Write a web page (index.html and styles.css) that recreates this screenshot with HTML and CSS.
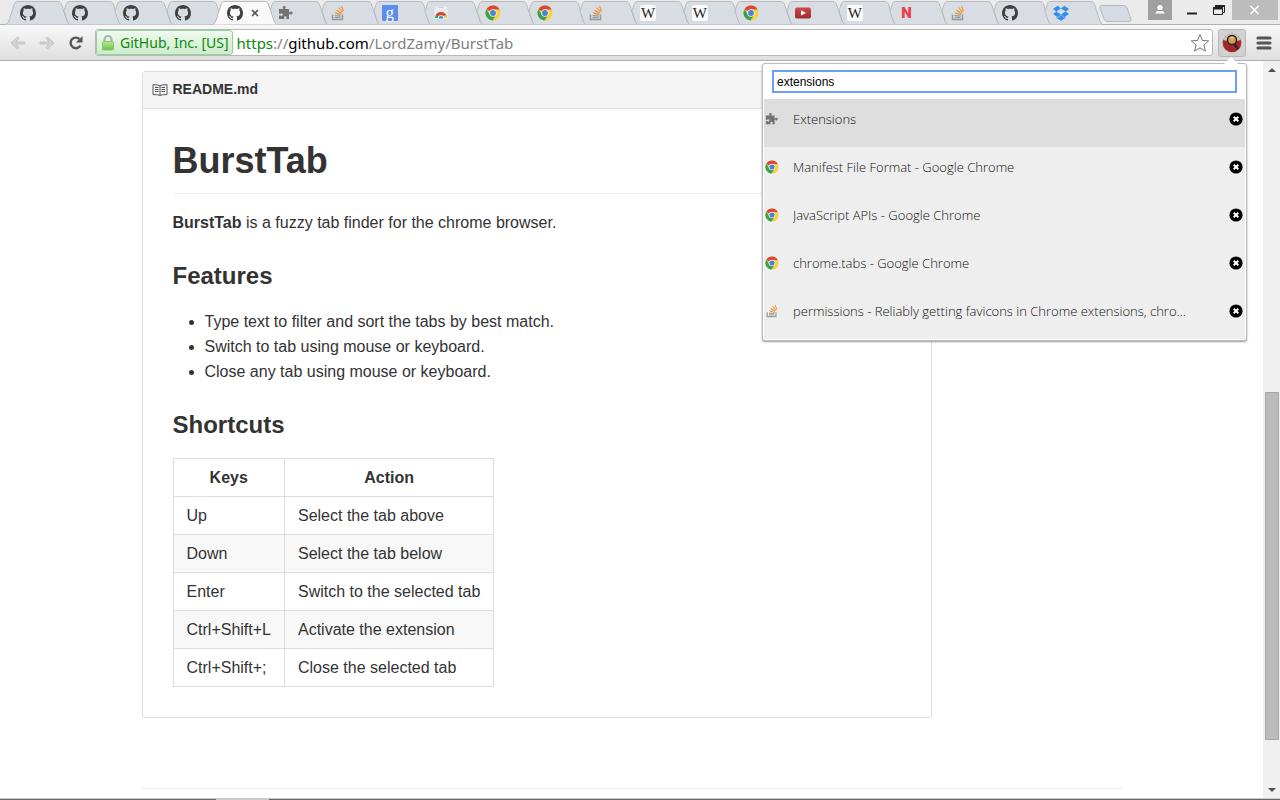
FILE: index.html
```html
<!DOCTYPE html>
<html lang="en">
<head>
<meta charset="utf-8">
<title>BurstTab</title>
<link rel="stylesheet" href="styles.css">
</head>
<body>
<svg class="sprite" aria-hidden="true">
  <defs>
    <linearGradient id="lockBody" x1="0" y1="0" x2="0" y2="1"><stop offset="0" stop-color="#b9e89a"/><stop offset="1" stop-color="#69c044"/></linearGradient>
    <linearGradient id="tubeBody" x1="0" y1="0" x2="0" y2="1"><stop offset="0" stop-color="#cf4a47"/><stop offset="1" stop-color="#a02c2c"/></linearGradient>
  </defs>
  <symbol id="tab-first" viewBox="0 0 65 25" preserveAspectRatio="none"><path d="M0 24.5C3 24 3.500 22 4.500 19L9 5C10 2 11 1.500 13 1.500H53C55 1.500 56 2.500 57 5L62 20C63 23 64 24 65 24.500"/></symbol>
  <symbol id="tab-rest" viewBox="0 0 65 25" preserveAspectRatio="none"><path d="M13 24.500C11.500 24 11 23 10 20L7 11L9 5C10 2 11 1.500 13 1.500H53C55 1.500 56 2.500 57 5L62 20C63 23 64 24 65 24.500"/></symbol>
  <symbol id="github" viewBox="0 0 16 16"><path fill="#404040" d="M8 0C3.580 0 0 3.580 0 8c0 3.540 2.290 6.530 5.470 7.590.4.070.55-.17.55-.38 0-.19-.01-.82-.01-1.490-2.010.37-2.530-.49-2.690-.94-.09-.23-.48-.94-.82-1.130-.28-.15-.68-.52-.01-.53.63-.01 1.080.58 1.230.82.72 1.210 1.870.87 2.330.66.07-.52.28-.87.51-1.070-1.780-.2-3.640-.89-3.640-3.950 0-.87.31-1.590.82-2.150-.08-.2-.36-1.020.08-2.120 0 0 .67-.21 2.200.82.64-.18 1.320-.27 2-.27s1.360.09 2 .27c1.530-1.040 2.200-.82 2.200-.82.44 1.100.16 1.920.08 2.120.51.56.82 1.270.82 2.150 0 3.070-1.870 3.750-3.650 3.950.29.25.54.73.54 1.480 0 1.070-.01 1.930-.01 2.200 0 .21.15.46.55.38A8.010 8.010 0 0 0 16 8c0-4.420-3.580-8-8-8z"/></symbol>
  <symbol id="puzzle" viewBox="0 0 16 16"><path fill="#727272" d="M1 4h4.200V3.400C4.600 2.900 4.500 2.400 4.700 1.800 5 1.200 5.600 1 6.200 1s1.200.3 1.400.9c.2.600 0 1.100-.5 1.500V4H11v3.300h.8c.4-.6 1-.8 1.600-.7.800.200 1.200.8 1.200 1.500s-.5 1.300-1.200 1.500c-.6.100-1.200-.1-1.600-.7H11V14H8.300v-.8c.5-.4.6-.9.400-1.300-.2-.5-.7-.7-1.300-.7s-1.100.2-1.300.7c-.2.500 0 1 .4 1.300v.8H1v-3.600h1.800c.4.500.9.600 1.400.4.500-.2.700-.7.700-1.200s-.3-1-.8-1.200c-.5-.2-.9 0-1.300.4H1z"/></symbol>
  <symbol id="stack" viewBox="0 0 16 16"><path d="M2.500 9.500v5h10v-5" fill="none" stroke="#999" stroke-width="1.500"/><path d="M4.500 12.500h6" stroke="#999" stroke-width="1.300"/><path d="M4.600 10.400l6 .7" stroke="#b09a80" stroke-width="1.300"/><path d="M5.200 7.800l5.800 1.900" stroke="#d4974f" stroke-width="1.300"/><path d="M6.500 5.200l5.100 3.200" stroke="#ee8e30" stroke-width="1.300"/><path d="M8.700 2.600l3.900 4.600M11.500 1l2 5.200" stroke="#f79a40" stroke-width="1.300"/></symbol>
  <symbol id="chrome" viewBox="0 0 16 16"><circle cx="8" cy="8" r="7.500" fill="#f9d13c"/><path d="M8 8L1.500 4.200A7.500 7.500 0 0 1 14.600 4.500H8z" fill="#db4638"/><path d="M8 8L4.900 9.700 1.500 4.200A7.500 7.500 0 0 0 7.600 15.500L11 9.700z" fill="#36a252"/><circle cx="8" cy="8" r="3.700" fill="#eef3f5"/><circle cx="8" cy="8" r="2.900" fill="#4a86cf"/></symbol>
  <symbol id="store" viewBox="0 0 16 16"><path d="M1.500 1.500h13V14h-13z" fill="#ececec"/><path d="M5.500 2.500h5" stroke="#ccc"/><path d="M2 13a6 6 0 0 1 12 0z" fill="#36a252"/><path d="M8 13h6A6 6 0 0 0 12.500 9z" fill="#f9d13c"/><path d="M2.800 10A6 6 0 0 1 13.200 10L10 11H6z" fill="#db4638"/><path d="M4.800 13.500a3.200 3.200 0 0 1 6.400 0z" fill="#fff"/><path d="M5.600 13.500a2.400 2.400 0 0 1 4.800 0z" fill="#4a86cf"/></symbol>
  <symbol id="tube" viewBox="0 0 16 16"><rect y="2.500" width="16" height="11" rx="2" fill="url(#tubeBody)"/><path d="M6 5.300v5.200L11 8z" fill="#fff"/></symbol>
  <symbol id="dropbox" viewBox="0 0 16 16"><path fill="#2f8fea" d="M4.700.8L8 3.600 3.300 6.500 0 3.900zM11.300.8L16 3.900l-3.300 2.600L8 3.600zM3.300 6.500L8 9.400l-3.300 2.800L0 9.100zM12.700 6.500L16 9.100l-4.700 3.100L8 9.400zM8 10.100l3.300 2.800 1.400-.9v1L8 15.700 3.300 13v-1l1.400.9z"/></symbol>
  <symbol id="remove" viewBox="0 0 14 14"><circle cx="7" cy="7" r="6.600" fill="#000"/><path d="M4.700 4.700l4.600 4.600M9.300 4.700L4.700 9.300" stroke="#fff" stroke-width="2"/></symbol>
</svg>

<div class="window">
  <header class="chrome">
    <div class="strip">
      <ul class="tabs">
        <li class="tab"><svg class="shape"><use href="#tab-first"/></svg><button class="fav" aria-label="GitHub"><svg><use href="#github"/></svg></button></li>
        <li class="tab"><svg class="shape"><use href="#tab-rest"/></svg><button class="fav" aria-label="GitHub"><svg><use href="#github"/></svg></button></li>
        <li class="tab"><svg class="shape"><use href="#tab-rest"/></svg><button class="fav" aria-label="GitHub"><svg><use href="#github"/></svg></button></li>
        <li class="tab"><svg class="shape"><use href="#tab-rest"/></svg><button class="fav" aria-label="GitHub"><svg><use href="#github"/></svg></button></li>
        <li class="tab active"><svg class="shape"><use href="#tab-first"/></svg><button class="fav" aria-label="BurstTab"><svg><use href="#github"/></svg></button><button class="tab-close" aria-label="Close tab"><svg viewBox="0 0 8 8"><path d="M1 1l6 6M7 1L1 7" stroke="#555" stroke-width="1.600"/></svg></button></li>
        <li class="tab"><svg class="shape"><use href="#tab-rest"/></svg><button class="fav" aria-label="Extensions"><svg><use href="#puzzle"/></svg></button></li>
        <li class="tab"><svg class="shape"><use href="#tab-rest"/></svg><button class="fav" aria-label="Stack Overflow"><svg><use href="#stack"/></svg></button></li>
        <li class="tab"><svg class="shape"><use href="#tab-rest"/></svg><button class="fav letter google" aria-label="Google">g</button></li>
        <li class="tab"><svg class="shape"><use href="#tab-rest"/></svg><button class="fav" aria-label="Web Store"><svg><use href="#store"/></svg></button></li>
        <li class="tab"><svg class="shape"><use href="#tab-rest"/></svg><button class="fav" aria-label="Google Chrome"><svg><use href="#chrome"/></svg></button></li>
        <li class="tab"><svg class="shape"><use href="#tab-rest"/></svg><button class="fav" aria-label="Google Chrome"><svg><use href="#chrome"/></svg></button></li>
        <li class="tab"><svg class="shape"><use href="#tab-rest"/></svg><button class="fav" aria-label="Stack Overflow"><svg><use href="#stack"/></svg></button></li>
        <li class="tab"><svg class="shape"><use href="#tab-rest"/></svg><button class="fav letter wiki" aria-label="Wikipedia">W</button></li>
        <li class="tab"><svg class="shape"><use href="#tab-rest"/></svg><button class="fav letter wiki" aria-label="Wikipedia">W</button></li>
        <li class="tab"><svg class="shape"><use href="#tab-rest"/></svg><button class="fav" aria-label="Google Chrome"><svg><use href="#chrome"/></svg></button></li>
        <li class="tab"><svg class="shape"><use href="#tab-rest"/></svg><button class="fav" aria-label="YouTube"><svg><use href="#tube"/></svg></button></li>
        <li class="tab"><svg class="shape"><use href="#tab-rest"/></svg><button class="fav letter wiki" aria-label="Wikipedia">W</button></li>
        <li class="tab"><svg class="shape"><use href="#tab-rest"/></svg><button class="fav letter netflix" aria-label="Netflix">N</button></li>
        <li class="tab"><svg class="shape"><use href="#tab-rest"/></svg><button class="fav" aria-label="Stack Overflow"><svg><use href="#stack"/></svg></button></li>
        <li class="tab"><svg class="shape"><use href="#tab-rest"/></svg><button class="fav" aria-label="GitHub"><svg><use href="#github"/></svg></button></li>
        <li class="tab"><svg class="shape"><use href="#tab-rest"/></svg><button class="fav" aria-label="Dropbox"><svg><use href="#dropbox"/></svg></button></li>
      </ul>
      <button class="new-tab" aria-label="New tab"><svg viewBox="0 0 33 17"><path d="M3 .5H24Q27 .5 28 3L32 14Q32.500 16.500 30 16.500H9Q6 16.500 5 14L1 3Q.5 .5 3 .5z" fill="#d5dbe4" stroke="#b5b8bd"/></svg></button>
      <div class="window-controls">
        <button class="user" aria-label="User"><svg viewBox="0 0 24 19"><circle cx="12" cy="6.500" r="2.600" fill="#fff"/><path d="M7.500 12.500q0-2.500 3-2.500h3q3 0 3 2.500z" fill="#fff"/></svg></button>
        <button class="minimise" aria-label="Minimise"><svg viewBox="0 0 12 20"><path d="M1 13.500h10" stroke="#222" stroke-width="2"/></svg></button>
        <button class="restore" aria-label="Restore"><svg viewBox="0 0 14 20"><path d="M3.500 8V5.500h9v7H10" fill="none" stroke="#222"/><path d="M3 6h10" stroke="#222" stroke-width="2"/><path d="M1.500 7.500h9v7h-9z" fill="#eee" stroke="#222"/><path d="M1 8.500h10" stroke="#222" stroke-width="2"/></svg></button>
        <button class="close" aria-label="Close"><svg viewBox="0 0 46 20"><path d="M18.500 6l8 8M26.500 6l-8 8" stroke="#fff" stroke-width="1.500"/></svg></button>
      </div>
    </div>
    <div class="toolbar">
      <button class="tool" aria-label="Back"><svg viewBox="0 0 16 14"><path d="M15 6H6l3-3.500L7.500 1 1 7l6.500 6L9 11.500 6 8h9z" fill="#d4d4d4" stroke="#c4c4c4"/></svg></button>
      <button class="tool" aria-label="Forward"><svg viewBox="0 0 16 14"><path d="M1 6h9L7 2.500 8.500 1 15 7l-6.500 6L7 11.500 10 8H1z" fill="#d4d4d4" stroke="#c4c4c4"/></svg></button>
      <button class="tool" aria-label="Reload"><svg viewBox="0 0 16 14"><path d="M12.500 9.500A5.300 5.300 0 1 1 11.500 3" fill="none" stroke="#555" stroke-width="2.400"/><path d="M14.500 0v6.500H8z" fill="#555"/></svg></button>
      <div class="omnibox">
        <span class="identity"><svg viewBox="0 0 12 16"><path d="M2.500 8V4.500a3.500 3.500 0 0 1 7 0V8" fill="none" stroke="#b0b0b0" stroke-width="2"/><rect x=".5" y="6.500" width="11" height="8.500" rx="1" fill="url(#lockBody)" stroke="#86c967"/></svg>GitHub, Inc. [US]</span>
        <span class="url"><span class="scheme">https</span>://<b>github.com</b>/LordZamy/BurstTab</span>
        <button class="star" aria-label="Bookmark this page"><svg viewBox="0 0 20 20"><path d="M10 1.500l2.400 5.900 6.300.5-4.800 4.100 1.500 6.200L10 14.900l-5.400 3.300L6.100 12 1.300 7.900l6.300-.5z" fill="#fff" stroke="#777"/></svg></button>
      </div>
      <button class="extension" aria-label="BurstTab"><svg viewBox="0 0 20 20"><circle cx="10" cy="10" r="9.300" fill="#a3262b"/><path d="M1 7Q4 1 10 .7 16 1 19 7L15 8H5z" fill="#c9c4bd"/><path d="M11.500 10l4.300 6" stroke="#2d2523" stroke-width="2.400"/><circle cx="10" cy="7" r="4.500" fill="#d2a253" stroke="#2d2523" stroke-width="1.600"/><path d="M8 5.500q2-2 4 0" stroke="#f1dca8" fill="none"/></svg></button>
      <button class="menu" aria-label="Menu"><svg viewBox="0 0 16 14"><path d="M2 2h12M2 7h12M2 12h12" stroke="#555" stroke-width="3.200" stroke-linecap="round"/></svg></button>
    </div>
  </header>

  <div class="viewport">
    <main class="page">
      <div class="container">
        <article class="readme">
          <h3 class="file-name"><svg viewBox="0 0 16 12"><path d="M8 2Q6.500.5 1 .7V10.500Q6.500 10.500 8 11.500 9.500 10.500 15 10.500V.7Q9.500.5 8 2zV11.500M3 3.500h3.500M3 5.500h3.500M3 7.500h3.500M9.500 3.500H13M9.500 5.500H13M9.500 7.500H13" fill="none" stroke="#555"/></svg>README.md</h3>
          <div class="markdown">
            <h1>BurstTab</h1>
            <p><strong>BurstTab</strong> is a fuzzy tab finder for the chrome browser.</p>
            <h2>Features</h2>
            <ul>
              <li>Type text to filter and sort the tabs by best match.</li>
              <li>Switch to tab using mouse or keyboard.</li>
              <li>Close any tab using mouse or keyboard.</li>
            </ul>
            <h2>Shortcuts</h2>
            <table>
              <thead><tr><th>Keys</th><th>Action</th></tr></thead>
              <tbody>
                <tr><td>Up</td><td>Select the tab above</td></tr>
                <tr><td>Down</td><td>Select the tab below</td></tr>
                <tr><td>Enter</td><td>Switch to the selected tab</td></tr>
                <tr><td>Ctrl+Shift+L</td><td>Activate the extension</td></tr>
                <tr><td>Ctrl+Shift+;</td><td>Close the selected tab</td></tr>
              </tbody>
            </table>
          </div>
        </article>
        <div class="footer-rule"></div>
      </div>
    </main>
    <div class="scrollbar">
      <svg viewBox="0 0 17 17"><path d="M5 11h8L9 7z" fill="#505050"/></svg>
      <div class="track"><div class="thumb"></div></div>
      <svg viewBox="0 0 17 17"><path d="M5 7h8l-4 4z" fill="#505050"/></svg>
    </div>
  </div>
  <div class="taskbar"><span class="task"></span></div>

  <section class="popup" aria-label="Tab finder">
    <svg class="arrow" viewBox="0 0 14 8"><path d="M0 8L7 1l7 7z" fill="#fff"/></svg>
    <div class="search"><input type="text" value="extensions" aria-label="Filter tabs"></div>
    <ul class="results">
      <li class="selected"><svg><use href="#puzzle"/></svg><span>Extensions</span><button aria-label="Close tab"><svg><use href="#remove"/></svg></button></li>
      <li><svg><use href="#chrome"/></svg><span>Manifest File Format - Google Chrome</span><button aria-label="Close tab"><svg><use href="#remove"/></svg></button></li>
      <li><svg><use href="#chrome"/></svg><span>JavaScript APIs - Google Chrome</span><button aria-label="Close tab"><svg><use href="#remove"/></svg></button></li>
      <li><svg><use href="#chrome"/></svg><span>chrome.tabs - Google Chrome</span><button aria-label="Close tab"><svg><use href="#remove"/></svg></button></li>
      <li><svg><use href="#stack"/></svg><span>permissions - Reliably getting favicons in Chrome extensions, chro...</span><button aria-label="Close tab"><svg><use href="#remove"/></svg></button></li>
    </ul>
  </section>
</div>
</body>
</html>
```

FILE: styles.css
```css
* { box-sizing: border-box; }
body { margin: 0; background: #fff; color: #333; font-family: "Liberation Sans", Arial, sans-serif; }
button { display: block; margin: 0; padding: 0; border: 0; background: none; }
svg { display: block; }
ul { list-style: none; margin: 0; padding: 0; }
.sprite { position: absolute; width: 0; height: 0; }

.window { position: relative; display: flex; flex-direction: column; min-height: 100vh; }

/* Tab strip */
.strip { display: flex; align-items: flex-start; height: 25px; padding: 0 2px 0 5px; background: #ebebeb; box-shadow: inset 0 -1px #b0b0b0; }
.tabs { display: flex; flex: 0 1 1085px; height: 25px; }
.tab { position: relative; flex: 1 1 0; display: flex; align-items: center; gap: 8px; padding-left: 15px; min-width: 0; }
.shape { position: absolute; top: 0; left: 0; width: calc(100% + 13px); height: 25px; fill: #d8dde4; stroke: #b8babd; }
.tab.active { z-index: 1; }
.active .shape { fill: #f9f9f9; }
.fav { position: relative; flex: none; }
.fav svg { width: 16px; height: 16px; }
.letter { width: 16px; height: 16px; text-align: center; line-height: 16px; border-radius: 2px; }
.google { background: #5b8def; color: #fff; font-family: "Liberation Serif", serif; font-size: 17px; line-height: 12px; border-radius: 1px; }
.wiki { background: #fafafa; color: #222; font-family: "Liberation Serif", serif; font-size: 15px; }
.netflix { color: #e8404c; font-family: Roboto, sans-serif; font-size: 15px; font-weight: 900; }
.tab-close { position: relative; flex: none; }
.tab-close svg { width: 8px; height: 8px; }
.new-tab { margin: 5px 0 0 9px; }
.new-tab svg { width: 33px; height: 17px; }
.window-controls { display: flex; margin-left: auto; }
.window-controls svg { height: 20px; }
.user { margin-right: 14px; background: #a0a0a0; }
.window-controls .user svg { width: 24px; height: 19px; }
.minimise svg { width: 12px; }
.restore { margin: 0 6px 0 14px; }
.restore svg { width: 14px; }
.close { background: #bcbcbc; }
.close svg { width: 46px; }

/* Toolbar */
.toolbar { display: flex; align-items: center; height: 36px; padding: 0 8px 0 10px; background: linear-gradient(#f8f8f8, #dfdfdf); border-bottom: 1px solid #b0b0b0; }
.tool { margin-right: 13px; }
.tool svg { width: 16px; height: 14px; }
.omnibox { display: flex; align-items: center; flex: 1; height: 27px; margin: 0 5px 0 -2px; border: 1px solid #b8b8b8; border-radius: 3px; background: #fff; font-family: "Noto Sans", "Open Sans", sans-serif; font-size: 15px; color: #808080; }
.identity { display: flex; align-items: center; gap: 6px; height: 25px; padding: 0 3px 0 5px; border: 1px solid #98cf98; border-radius: 3px; background: linear-gradient(#effaef, #cdeccd); color: #0b8a0b; font-size: 14px; white-space: nowrap; }
.identity svg { width: 12px; height: 16px; }
.url { flex: 1; margin-left: 4px; white-space: nowrap; }
.url b { font-weight: 400; color: #000; }
.url .scheme { color: #0b8a0b; }
.star { margin-right: 2px; }
.star svg { width: 20px; height: 20px; }
.extension { padding: 3px; border: 1px solid #b8b8b8; border-radius: 3px; background: #d2d2d2; }
.extension svg { width: 20px; height: 20px; }
.menu { margin-left: 10px; }
.menu svg { width: 16px; height: 14px; }

/* Page */
.viewport { display: flex; flex: 1; }
.page { flex: 1; min-width: 0; padding-top: 10px; }
.container { max-width: 980px; margin: 0 auto; }
.readme { max-width: 790px; border: 1px solid #ddd; border-radius: 3px; }
.file-name { display: flex; align-items: center; gap: 5px; margin: 0; padding: 9px 9px 10px; border-bottom: 1px solid #e2e2e2; background: #f5f5f5; font-size: 14px; line-height: 17px; }
.file-name svg { width: 16px; height: 12px; }
.markdown { padding: 30px; font-size: 16px; line-height: 25px; }
.markdown h1 { margin: 0 0 16px; padding-bottom: 11px; border-bottom: 1px solid #eee; font-size: 36px; line-height: 43px; }
.markdown h2 { margin: 24px 0 16px; font-size: 24px; line-height: 34px; }
.markdown p { margin: 0; }
.markdown ul { padding-left: 32px; list-style: disc; }
.markdown table { border-collapse: collapse; }
.markdown th, .markdown td { padding: 6px 13px; border: 1px solid #ddd; }
.markdown tbody tr:nth-child(even) { background: #f8f8f8; }
.footer-rule { margin-top: 70px; border-top: 1px solid #eee; }

/* Scrollbar */
.scrollbar { display: flex; flex-direction: column; width: 17px; background: #f0f0f0; }
.scrollbar > svg { width: 17px; height: 17px; }
.track { flex: 1; display: flex; flex-direction: column; justify-content: flex-end; padding: 0 1px 41px 2px; }
.thumb { height: 348px; background: #bbb; border: 1px solid #a8a8a8; }
.taskbar { height: 2px; background: #666; border-top: 1px solid #ccc; padding-left: 216px; }
.task { display: block; width: 53px; height: 1px; background: #ccc; }

/* Tab finder */
.popup { position: absolute; z-index: 2; top: 63px; right: 33px; width: 485px; padding: 0 1px 1px; border: 1px solid #bbb; border-radius: 3px; background: #fff; box-shadow: 0 1px 2px #999; }
.arrow { position: absolute; top: -8px; right: 8px; width: 14px; height: 8px; }
.search { padding: 6px 8px; }
.search input { display: block; width: 100%; height: 23px; padding: 0 3px; border: 2px solid #699ff5; border-radius: 0; background: #fff; color: #000; outline: 0; font: 12px "Liberation Sans", Arial, sans-serif; }
.results li { display: flex; align-items: center; height: 48px; padding: 0 2px 8px 1px; background: #eee; font-family: "Open Sans", "Noto Sans", sans-serif; font-size: 13px; font-weight: 300; line-height: 20px; color: #111; }
.results .selected { background: #dedede; }
.results svg { flex: none; width: 14px; height: 14px; }
.results span { flex: 1; min-width: 0; margin: 0 12px 0 14px; overflow: hidden; white-space: nowrap; text-overflow: ellipsis; }
```
